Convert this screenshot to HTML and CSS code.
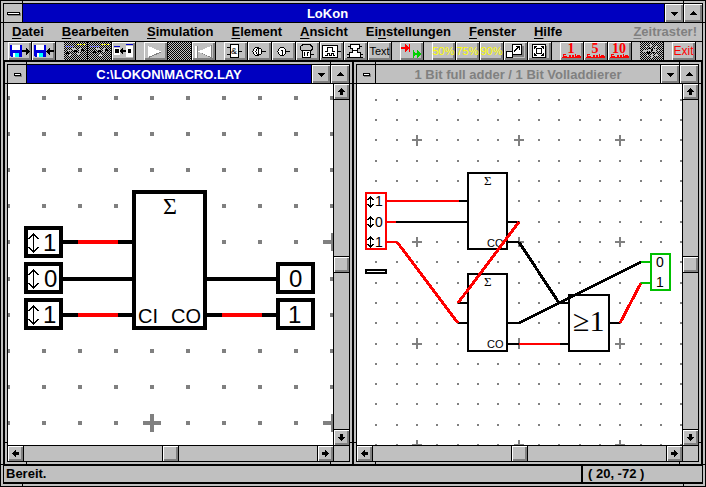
FILE: index.html
```html
<!DOCTYPE html>
<html lang="de">
<head>
<meta charset="utf-8">
<title>LoKon</title>
<link rel="stylesheet" href="styles.css">
</head>
<body>
<svg class="defs" aria-hidden="true">
  <defs>
    <pattern id="dither" width="2" height="2" patternUnits="userSpaceOnUse"><path fill="#c0c0c0" d="M0 0h2v2H0z"/><path d="M0 0h1v1H0zM1 1h1v1H1z"/></pattern>
    <symbol id="down" viewBox="0 0 18 18"><path d="M6 8h7v1H6zM7 9h5v1H7zM8 10h3v1H8zM9 11h1v1H9z"/></symbol>
    <symbol id="up" viewBox="0 0 18 18"><path d="M9 7h1v1H9zM8 8h3v1H8zM7 9h5v1H7zM6 10h7v1H6z"/></symbol>
    <symbol id="arrow" viewBox="0 0 15 15"><path d="M7 4h1v1h1v1h1v1h1v1H9v3H6V8H4V7h1V6h1V5h1z"/></symbol>
    <symbol id="disk" viewBox="0 0 12 12"><path fill="#0000e0" d="M0 0h12v12H1l-1-1z"/><path fill="#fff" d="M2 0h8v5H2zM3 8h6v4H3z"/><path fill="#0ff" d="M5 8h4v4H5z"/></symbol>
    <symbol id="updown" viewBox="0 0 12 20"><path fill="none" stroke="#000" d="M5.500 1v18M.5 6l5-5 5 5M.5 14l5 5 5-5"/></symbol>
    <symbol id="updown-small" viewBox="0 0 8 12"><path fill="none" stroke="#000" d="M3.500 0v12M.5 4l3-3 3 3M.5 8l3 3 3-3"/></symbol>
    <symbol id="raster" viewBox="0 0 19 4"><path fill="#f00" d="M1 0h3v1H2v1h3v1h2V1h2v2h1V1h2v2h1V0h1v2h1V1h3v1h1v2H0V3h1z"/></symbol>
  </defs>
</svg>
<main class="app frame">
  <div class="app-inner">
    <header class="titlebar">
      <button class="sys" aria-label="Systemmenü"><i></i></button>
      <h1 class="caption main-caption">LoKon</h1>
      <button class="winbtn" aria-label="Minimieren"><svg><use href="#down"/></svg></button>
      <button class="winbtn" aria-label="Maximieren"><svg><use href="#up"/></svg></button>
    </header>
    <nav class="menu">
      <a href="#"><u>D</u>atei</a>
      <a href="#"><u>B</u>earbeiten</a>
      <a href="#"><u>S</u>imulation</a>
      <a href="#"><u>E</u>lement</a>
      <a href="#"><u>A</u>nsicht</a>
      <a href="#">Ei<u>n</u>stellungen</a>
      <a href="#"><u>F</u>enster</a>
      <a href="#"><u>H</u>ilfe</a>
      <a href="#" class="off"><u>Z</u>eitraster!</a>
    </nav>
    <div class="toolbar">
      <div class="group">
        <button aria-label="Laden"><svg viewBox="0 0 23 18"><use href="#disk" x="2" y="3" width="12" height="12"/><path d="M14 8h4V6h1v1h1v1h1v1h1v1h-1v1h-1v1h-1v1h-1v-3h-4z"/></svg></button>
        <button aria-label="Speichern"><svg viewBox="0 0 23 18"><use href="#disk" x="2" y="3" width="12" height="12"/><path d="M22 8h-4V6h-1v1h-1v1h-1v1h-1v1h1v1h1v1h1v1h1v-3h4z"/></svg></button>
      </div>
      <div class="group">
        <button disabled aria-label="Ausschneiden"><svg viewBox="0 0 23 18"><path fill="url(#dither)" d="M0 0h23v18H0z"/><path stroke="#ff0" stroke-dasharray="2 1" d="M13 2.500h9"/><path stroke="#22f" stroke-dasharray="1 1" d="M2 4.500h7"/><path fill="#c0c0c0" d="M4 8h4v1H4zM8 6h4v2H8zM15 6h2v4h-2zM13 11h3v2h-3zM5 12h2v2H5z"/><path d="M10 8h3v2h-3zM17 7h3v2h-3zM2 10h3v2H2z"/></svg></button>
        <button disabled aria-label="Einfügen"><svg viewBox="0 0 23 18"><path fill="url(#dither)" d="M0 0h23v18H0z"/><path stroke="#ff0" stroke-dasharray="2 1" d="M13 2.500h9"/><path stroke="#22f" stroke-dasharray="1 1" d="M2 4.500h9"/><path fill="#c0c0c0" d="M8 6h4v2H8zM15 6h2v4h-2zM11 12h3v2h-3z"/><path d="M10 8h3v2h-3zM17 7h3v2h-3zM5 9h3v2H5z"/></svg></button>
        <button aria-label="Makro"><svg viewBox="0 0 23 18"><path fill="#00c" d="M2 4h6v1H2zM14 2h7v1h-7z"/><path fill="#fff" d="M2 6h6v7H2zM14 4h7v11h-7z"/><path d="M3 7h4v4H3zM16 7h3v4h-3zM14 8h-3V6h-1v1H9v1H8v2h1v1h1v1h1v-2h3z"/></svg></button>
      </div>
      <div class="group">
        <button aria-label="Start"><svg viewBox="0 0 23 18"><path fill="#808080" d="M5 16l13-6-2-1L5 14z"/><path fill="#fff" d="M4 4v11l13-5.500z"/></svg></button>
        <button disabled aria-label="Pause"><svg viewBox="0 0 23 18"><path fill="url(#dither)" d="M0 0h23v18H0z"/></svg></button>
        <button aria-label="Zurück"><svg viewBox="0 0 23 18"><path fill="#808080" d="M5 4h1v12H5zM20 3v13h-1L7 10h3l9 4V3z"/><path fill="#fff" d="M3 4h2v12H3zM19 4v11L6 9.500z"/></svg></button>
      </div>
      <div class="group">
        <button aria-label="Gatter"><svg viewBox="0 0 23 18"><path fill="#fff" stroke="#000" d="M6.500 2.500h8v13h-8z"/><path fill="none" stroke="#000" d="M3 5.500h3M3 12.500h3M15 9.500h3"/><text x="7" y="12" class="t9">&amp;</text></svg></button>
        <button aria-label="Eingang"><svg viewBox="0 0 23 18"><g fill="#fff" stroke="#000"><circle cx="9" cy="9.500" r="4"/><circle cx="11" cy="9.500" r="3"/><path d="M10.500 7v5M14 9.500h4"/></g></svg></button>
        <button aria-label="Ausgang"><svg viewBox="0 0 23 18"><g fill="#fff" stroke="#000"><circle cx="10" cy="9.500" r="4"/><path d="M9 8.500h1v4M14 9.500h4"/></g></svg></button>
        <button aria-label="Lampe"><svg viewBox="0 0 23 18"><path fill="none" stroke="#000" d="M7 9.500L4.500 7.500v-3L7 2.500h7l2 2v3l-2 2"/><path fill="#fff" stroke="#000" d="M6.500 8.500h8v7h-8zM15 12.500h3"/><path d="M8 10h1v4H8zM11 10h2v1h-1v3h-1z"/></svg></button>
        <button aria-label="Taktgeber"><svg viewBox="0 0 23 18"><path fill="#fff" stroke="#000" d="M2.500 3.500h15v12h-15zM18 9.500h3"/><path fill="none" stroke="#000" d="M5 9.500h2.500v-4h5v4H15M5 13.500h2v-2h2v2h2v-2h2v2h2"/></svg></button>
        <button aria-label="Baustein"><svg viewBox="0 0 23 18"><path fill="#fff" stroke="#000" d="M6.500 2.500h9v4h-2v4h3v5h-11v-5h3v-4h-2z"/><path fill="none" stroke="#000" d="M4 4.500h2M16 4.500h2M3 12.500h2M3 15.500h2M17 12.500h2M17 15.500h2M9 8.500h4"/></svg></button>
        <button class="txt">Text</button>
      </div>
      <div class="group">
        <button aria-label="Signale"><svg viewBox="0 0 23 18"><path fill="#f00" d="M1 5h4V2l4 4V2h1v8H9V7l-4 3V7H1z"/><path fill="#00d000" d="M13 8h1v2l1 1h2V8l4 4-4 4v-3h-2l-1 3h-1z"/></svg></button>
      </div>
      <div class="group">
        <button class="zoom">50%</button>
        <button class="zoom">75%</button>
        <button class="zoom">90%</button>
        <button aria-label="Vergrößern"><svg viewBox="0 0 23 18"><path fill="#808080" d="M9 4h11v11H9z"/><path fill="#fff" stroke="#000" d="M8.500 2.500h9v10h-9zM2.500 9.500h6v6h-6z"/><path fill="none" stroke="#000" d="M10 9.500l5-5M12 4.500h3.500V8"/></svg></button>
        <button aria-label="Einpassen"><svg viewBox="0 0 23 18"><path fill="#808080" d="M6 4h13v13H6z"/><path fill="#fff" stroke="#000" d="M4.500 2.500h13v13h-13z"/><path fill="none" stroke="#000" d="M8.500 6.500h5v5h-5zM6.500 7V4.500H9M13 4.500h2.500V7M15.500 11v2.500H13M9 13.500H6.500V11M7 5l2 2M15 5l-2 2M7 13l2-2M15 13l-2-2"/></svg></button>
      </div>
      <div class="group">
        <button aria-label="Raster 1"><svg viewBox="0 0 23 18"><text x="11" y="11" class="num">1</text><use href="#raster" x="2" y="12" width="19" height="4"/></svg></button>
        <button aria-label="Raster 5"><svg viewBox="0 0 23 18"><text x="11" y="11" class="num">5</text><use href="#raster" x="2" y="12" width="19" height="4"/></svg></button>
        <button aria-label="Raster 10"><svg viewBox="0 0 23 18"><text x="11" y="11" class="num">10</text><use href="#raster" x="2" y="12" width="19" height="4"/></svg></button>
      </div>
      <div class="group">
        <button disabled aria-label="Optionen"><svg viewBox="0 0 23 18"><path fill="url(#dither)" d="M0 0h23v18H0z"/><path fill="#c0c0c0" d="M10 2h2v3h-2zM5 4h3v1H5zM15 4h2v2h-2zM3 8h4v2H3zM8 7h3v2H8zM13 7h3v3h-3zM17 8h3v1h-3zM6 13h3v1H6zM11 12h2v4h-2zM15 12h3v2h-3z"/><path d="M8 6h2v1H8zM11 7h2v2h-2zM7 10h3v2H7zM12 10h3v1h-3z"/></svg></button>
      </div>
      <div class="group">
        <button class="txt exit">Exit</button>
      </div>
    </div>
    <div class="mdi">
      <section class="child frame">
        <div class="child-inner">
          <header class="titlebar">
            <button class="sys small" aria-label="Fenstermenü"><i></i></button>
            <h2 class="caption">C:\LOKON\MACRO.LAY</h2>
            <button class="winbtn" aria-label="Minimieren"><svg><use href="#down"/></svg></button>
            <button class="winbtn" aria-label="Maximieren"><svg><use href="#up"/></svg></button>
          </header>
          <div class="view">
            <svg class="canvas" viewBox="8 84 325 361" preserveAspectRatio="xMinYMin slice" role="img" aria-label="Makro Volladdierer">
              <g fill="none" stroke="#808080" stroke-width="4">
                <path stroke-dasharray="4 32" d="M6 98H333M6 134H333M6 170H333M6 206H333M6 242H333M6 279H333M6 315H333M6 351H333M6 387H333M6 423H333"/>
                <path d="M143 423h18M152 414v18M323 242h18M333 233v18M323 423h18M333 414v18"/>
              </g>
              <g fill="#fff" stroke="#000" stroke-width="4">
                <path d="M63 242h70M63 279h70M63 315h70M206 279h71M206 315h71"/>
                <path stroke="#f00" d="M78 242h40M78 315h40M222 315h40"/>
                <path d="M26 228h35v28H26zM26 264h35v28H26zM26 300h35v28H26zM134 192h71v136h-71zM278 264h35v28h-35zM278 300h35v28h-35z"/>
              </g>
              <use href="#updown" x="28" y="233" width="12" height="20"/>
              <use href="#updown" x="28" y="269" width="12" height="20"/>
              <use href="#updown" x="28" y="305" width="12" height="20"/>
              <g class="t24">
                <text x="43" y="251">1</text><text x="44" y="287">0</text><text x="43" y="323">1</text>
                <text x="289" y="287">0</text><text x="288" y="323">1</text>
              </g>
              <text class="t20" x="138" y="323">CI</text><text class="t20" x="171" y="323">CO</text>
              <text class="s24" x="163" y="214">Σ</text>
            </svg>
            <div class="vbar">
              <button aria-label="Nach oben"><svg><use href="#arrow"/></svg></button>
              <div class="track"><span class="thumb"></span></div>
              <button aria-label="Nach unten"><svg class="r180"><use href="#arrow"/></svg></button>
            </div>
            <div class="hbar">
              <button aria-label="Nach links"><svg class="r270"><use href="#arrow"/></svg></button>
              <div class="track"><span class="thumb"></span></div>
              <button aria-label="Nach rechts"><svg class="r90"><use href="#arrow"/></svg></button>
            </div>
            <div class="corner"></div>
          </div>
        </div>
      </section>
      <section class="child frame">
        <div class="child-inner">
          <header class="titlebar inactive">
            <button class="sys small" aria-label="Fenstermenü"><i></i></button>
            <h2 class="caption">1 Bit full adder / 1 Bit Volladdierer</h2>
            <button class="winbtn" aria-label="Minimieren"><svg><use href="#down"/></svg></button>
            <button class="winbtn" aria-label="Maximieren"><svg><use href="#up"/></svg></button>
          </header>
          <div class="view">
            <svg class="canvas" viewBox="357 84 325 361" preserveAspectRatio="xMinYMin slice" role="img" aria-label="Schaltplan Volladdierer">
              <g fill="none" stroke="#808080" stroke-width="2">
                <path stroke-dasharray="2 19 2 18 2 18" d="M375 100H682M375 120H682M375 140H682M375 161H682M375 181H682M375 201H682M375 222H682M375 242H682M375 262H682M375 283H682M375 303H682M375 323H682M375 344H682M375 364H682M375 384H682M375 404H682M375 425H682M375 445H682"/>
                <path d="M412 140h10M417 135v11M514 140h10M519 135v11M615 140h10M620 135v11M412 242h10M417 237v10M514 242h10M519 237v10M615 242h10M620 237v10M412 344h10M417 338v11M514 344h10M519 338v11M615 344h10M620 338v11M412 445h10M417 440v8M514 445h10M519 440v8M615 445h10M620 440v8"/>
              </g>
              <g fill="#fff" stroke="#000" stroke-width="2">
                <path d="M468 173h39v76h-39zM468 274h39v77h-39zM569 295h40v56h-40zM366 270h20v3h-20z"/>
                <path stroke="#f00" d="M366 193h20v56h-20z"/>
                <path stroke="#00c000" d="M651 254h19v36h-19z"/>
              </g>
              <text class="s13" x="484" y="185">Σ</text><text class="s13" x="484" y="286">Σ</text>
              <text class="t11" x="487" y="247">CO</text><text class="t11" x="487" y="348">CO</text>
              <g fill="none" stroke="#000" stroke-width="2">
                <path d="M459 201h9M396 222h72M458 303h10M458 323h10M508 222h11M508 344h11M560 344h9M610 323h10M508 242h11M559 303h10M508 323h11"/>
                <path stroke-width="3" d="M519 242l40 61M519 323l122-61"/>
                <path stroke="#f00" d="M387 201h72M387 222h9M519 344h41M387 242h10"/>
                <path stroke="#f00" stroke-width="3" d="M397 242l61 81M519 222l-61 81M620 323l21-40"/>
                <path stroke="#00c000" d="M641 262h10M641 283h10"/>
              </g>
              <use href="#updown-small" x="367" y="196" width="8" height="12"/>
              <use href="#updown-small" x="367" y="216" width="8" height="12"/>
              <use href="#updown-small" x="367" y="236" width="8" height="12"/>
              <g class="t14">
                <text x="375" y="206">1</text><text x="375" y="227">0</text><text x="375" y="247">1</text>
                <text x="656" y="267">0</text><text x="656" y="287">1</text>
              </g>
              <text class="s30" x="573" y="331">≥1</text>
            </svg>
            <div class="vbar">
              <button aria-label="Nach oben"><svg><use href="#arrow"/></svg></button>
              <div class="track"><span class="thumb"></span></div>
              <button aria-label="Nach unten"><svg class="r180"><use href="#arrow"/></svg></button>
            </div>
            <div class="hbar">
              <button aria-label="Nach links"><svg class="r270"><use href="#arrow"/></svg></button>
              <div class="track"><span class="thumb"></span></div>
              <button aria-label="Nach rechts"><svg class="r90"><use href="#arrow"/></svg></button>
            </div>
            <div class="corner"></div>
          </div>
        </div>
      </section>
    </div>
    <footer class="status">
      <span class="message">Bereit.</span>
      <span class="coords">( 20, -72 )</span>
    </footer>
  </div>
</main>
</body>
</html>
```
FILE: styles.css
```css
* { box-sizing: border-box; }

body {
  margin: 0;
  background: #c0c0c0;
  color: #000;
  font: bold 13px/18px "Liberation Sans", Arial, sans-serif;
}

h1, h2 { margin: 0; font: inherit; }
svg { display: block; shape-rendering: crispEdges; }
.defs { position: absolute; width: 0; height: 0; }

button {
  margin: 0;
  padding: 0;
  border: 0;
  border-radius: 0;
  background: #c0c0c0;
  color: #000;
  font: inherit;
}

/* Window frames: the gradients are the resize notches near each corner. */
.frame {
  --line: linear-gradient(#000, #000);
  display: flex;
  padding: 2px;
  border: 1px solid #000;
  background:
    var(--line) left var(--notch) top 0 / 1px 100% no-repeat,
    var(--line) right var(--notch) top 0 / 1px 100% no-repeat,
    var(--line) left 0 top var(--notch) / 100% 1px no-repeat,
    var(--line) left 0 bottom var(--notch) / 100% 1px no-repeat,
    #c0c0c0;
}

.app { --notch: 21px; min-height: 100vh; }
.child { --notch: 21px; flex: 1; min-width: 0; }

.app-inner, .child-inner {
  flex: 1;
  min-width: 0;
  display: flex;
  flex-direction: column;
  border: 1px solid #000;
  background: #c0c0c0;
}

.titlebar {
  display: flex;
  height: 19px;
  border-bottom: 1px solid #000;
  background: #0000c0;
  color: #fff;
}

.titlebar.inactive { background: #c0c0c0; color: #808080; }
.caption { flex: 1; padding-top: 1px; text-align: center; white-space: nowrap; overflow: hidden; }
.main-caption { padding-right: 32px; }

.sys {
  display: grid;
  place-items: center;
  width: 19px;
  border-right: 1px solid #000;
}

.sys i {
  width: 13px;
  height: 3px;
  border: 1px solid #000;
  background: #fff;
  box-shadow: 1px 1px #808080;
}

.sys.small i { width: 7px; }

.winbtn {
  width: 19px;
  border-left: 1px solid #000;
  box-shadow: inset 1px 1px #fff, inset -2px -2px #808080;
}

.winbtn svg { width: 18px; height: 18px; }

.menu {
  display: flex;
  gap: 18px;
  height: 19px;
  padding: 0 5px 0 8px;
  border-bottom: 1px solid #000;
}

.menu a { color: #000; text-decoration: none; }
.menu u { text-underline-offset: 2px; }
.menu .off { margin-left: auto; color: #808080; }

.toolbar {
  display: flex;
  gap: 8px;
  height: 19px;
  padding-left: 4px;
  border-bottom: 1px solid #000;
}

.group { display: flex; }

.group button {
  width: 24px;
  height: 18px;
  border-right: 1px solid #000;
  box-shadow: inset 1px 1px #fff, inset -2px -2px #808080;
  overflow: hidden;
}

.group svg { width: 23px; height: 18px; }
.group .txt { font-size: 11px; font-weight: normal; line-height: 18px; }
.group .exit { color: #f00; font-size: 12px; }
.group .zoom { color: #ff0; font-size: 11px; font-weight: normal; }
.t9 { font: 9px "Liberation Sans", sans-serif; }
.num { font: bold 14px "Liberation Serif", serif; fill: #f00; text-anchor: middle; }

.mdi { flex: 1; display: flex; }

.view {
  flex: 1;
  display: grid;
  grid-template: minmax(0, 1fr) 16px / minmax(0, 1fr) 16px;
}

.canvas { width: 100%; height: 100%; background: #fff; }
.t11 { font: 11px "Liberation Sans", sans-serif; }
.t14 { font: 14px "Liberation Sans", sans-serif; }
.t20 { font: 20px "Liberation Sans", sans-serif; }
.t24 { font: 24px "Liberation Sans", sans-serif; }
.s13 { font: 13px "Liberation Serif", serif; }
.s24 { font: 24px "Liberation Serif", serif; }
.s30 { font: 30px "Liberation Serif", serif; }

.vbar, .hbar, .track { display: flex; }
.vbar, .vbar .track { flex-direction: column; }
.vbar { border-left: 1px solid #000; }
.hbar { border-top: 1px solid #000; }
.track { flex: 1; justify-content: center; }
.corner { border-top: 1px solid #000; border-left: 1px solid #000; }

.vbar button, .hbar button, .thumb {
  box-shadow: inset 1px 1px #fff, inset -2px -2px #808080;
}

.vbar button { height: 16px; }
.hbar button { width: 16px; }
.vbar .thumb { height: 17px; border: solid #000; border-width: 1px 0; }
.hbar .thumb { width: 17px; border: solid #000; border-width: 0 1px; }
.vbar button:first-child { border-bottom: 1px solid #000; }
.vbar button:last-child { border-top: 1px solid #000; }
.hbar button:first-child { border-right: 1px solid #000; }
.hbar button:last-child { border-left: 1px solid #000; }
.vbar svg, .hbar svg { width: 15px; height: 15px; }
.r90 { transform: rotate(90deg); }
.r180 { transform: rotate(180deg); }
.r270 { transform: rotate(270deg); }

.status {
  display: flex;
  height: 18px;
  border: solid #000;
  border-width: 1px 0;
  line-height: 16px;
}

.message { flex: 1; padding-left: 2px; }
.coords { width: 121px; padding-left: 5px; border-left: 2px solid #000; }
```
